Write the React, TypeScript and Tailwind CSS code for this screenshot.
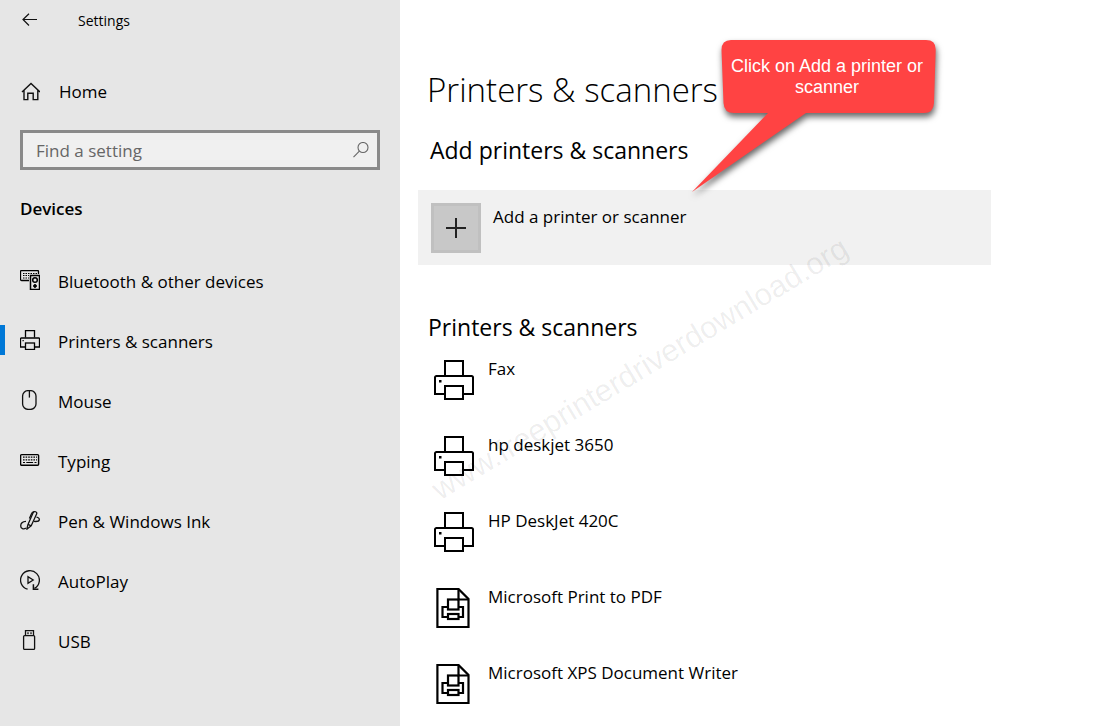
import type { ReactNode } from 'react';
import { clsx } from 'clsx';

function BackIcon() {
    return (
        <svg width="16" height="14" viewBox="0 0 16 14" fill="none" stroke="#111" strokeWidth="1.2">
            <path d="M7 .8 1 6.5l6 6M1 6.5h14" />
        </svg>
    );
}

function HomeIcon() {
    return (
        <svg width="20" height="20" viewBox="0 0 20 20" fill="none" stroke="#111" strokeWidth="1.4">
            <path d="M2 10 11 1.4l9 8.6M4 8.6v9h3.8v-6.4h5.4v6.4h4.6v-9" />
        </svg>
    );
}

function SearchIcon() {
    return (
        <svg width="16" height="16" viewBox="0 0 16 16" fill="none" stroke="#666" strokeWidth="1.1">
            <circle cx="10" cy="5.5" r="5" />
            <path d="M6.4 9.2.5 15.2" />
        </svg>
    );
}

function DevicesIcon() {
    return (
        <svg width="20" height="20" viewBox="0 0 20 20" fill="none" stroke="#000">
            <path d="M9 10.5H1.5a1 1 0 0 1-1-1v-8a1 1 0 0 1 1-1h16a1 1 0 0 1 1 1V4" strokeWidth="1.3" />
            <path d="M3 3.5h14M3 5.5h6M3 8h6" strokeDasharray="1.5 1" />
            <rect x="10.5" y="5.5" width="9" height="14" strokeWidth="1.5" />
            <circle cx="15" cy="10" r="2.3" strokeWidth="1.5" />
            <circle cx="15" cy="16" r="1.4" fill="#000" />
        </svg>
    );
}

function PrinterIcon({ size }: { size: number }) {
    // thin lines fade at the small size, so it gets a heavier stroke
    const stroke = size < 40 ? 2.6 : 2;

    return (
        <svg width={size} height={size} viewBox="0 0 40 40" fill="none" stroke="#000" strokeWidth={stroke}>
            <path d="M11 15V1h18v14" />
            <path d="M11 34H1V17.5a1.5 1.5 0 0 1 1.5-1.5h35a1.5 1.5 0 0 1 1.5 1.5V34H29" />
            <rect x="11" y="26" width="18" height="13" />
            <rect x="5" y="20" width="2.5" height="2.5" fill="#000" stroke="none" />
        </svg>
    );
}

function MouseIcon() {
    return (
        <svg width="20" height="20" viewBox="0 0 20 20" fill="none" stroke="#111" strokeWidth="1.3">
            <rect x="2.6" y=".6" width="13.4" height="18.8" rx="5.5" />
            <path d="M9.4.6v7" />
        </svg>
    );
}

function KeyboardIcon() {
    return (
        <svg width="20" height="20" viewBox="0 0 20 20" fill="none" stroke="#000">
            <rect x=".6" y="4.6" width="18" height="10.6" rx="1" strokeWidth="1.4" />
            <path d="M3 7.2h14M3 9.8h14" strokeWidth="1.2" strokeDasharray="1.6 1" />
            <path d="M3 12.5h2M6.3 12.5h6.8M14.5 12.5h2" strokeWidth="1.2" />
        </svg>
    );
}

function PenIcon() {
    return (
        <svg width="20" height="20" viewBox="0 0 20 20" fill="none" stroke="#111" strokeWidth="1.3" strokeLinejoin="round">
            <path d="M6.8 19.2 8 14.4 13.2 2.6C14.1.6 17.6 1.9 16.6 4L11.2 15.8Z" />
            <path d="M9.4 8.4 11.6 3.4c.4-1 1.4-1.6 2.4-1.6M11.2 15.8 8 14.4" />
            <path d="M6 11.3c-3 .2-5.3 2-5.3 4.6 0 2.8 3 3.6 5.2 2.2" />
            <path d="M16.5 7.2c2 .3 3 1.3 2.8 2.6-.3 1.8-3.2 1.8-5.3 1.6" />
        </svg>
    );
}

function AutoPlayIcon() {
    return (
        <svg width="20" height="20" viewBox="0 0 20 20" fill="none" stroke="#111" strokeWidth="1.3">
            <path d="M7.6 19.2A9.4 9.4 0 1 1 14.4 18.4" />
            <path d="M13.4 14.2v5h5" strokeWidth="1.5" />
            <path d="M8 6.6v6.8L13.2 10Z" />
        </svg>
    );
}

function UsbIcon() {
    return (
        <svg width="20" height="20" viewBox="0 0 20 20" fill="none" stroke="#111" strokeWidth="1.3">
            <path d="M5.500 5.500v-5h8v5" />
            <rect x="3.600" y="5.600" width="11" height="13.800" rx="1" />
            <path d="M8 2.200v2M11 2.200v2" />
        </svg>
    );
}

function PrintDocumentIcon() {
    return (
        <svg width="36" height="40" viewBox="0 0 36 40" fill="none" stroke="#000" strokeWidth="2.2">
            <path d="M1.400 1H22.500L32.500 11V39H1.400Z" />
            <path d="M22.500 1v10.500h10" />
            <rect x="12" y="11.500" width="10.500" height="10" />
            <path d="M12 19H6.500v10H12M22.500 19H27v10h-4.500" />
            <rect x="12" y="26" width="10.500" height="5" />
        </svg>
    );
}

interface NavItem {
    label: string;
    icon: ReactNode;
    active?: boolean;
}

const navItems: NavItem[] = [
    { label: 'Bluetooth & other devices', icon: <DevicesIcon /> },
    { label: 'Printers & scanners', icon: <PrinterIcon size={20} />, active: true },
    { label: 'Mouse', icon: <MouseIcon /> },
    { label: 'Typing', icon: <KeyboardIcon /> },
    { label: 'Pen & Windows Ink', icon: <PenIcon /> },
    { label: 'AutoPlay', icon: <AutoPlayIcon /> },
    { label: 'USB', icon: <UsbIcon /> },
];

const printers = [
    { name: 'Fax', virtual: false },
    { name: 'hp deskjet 3650', virtual: false },
    { name: 'HP DeskJet 420C', virtual: false },
    { name: 'Microsoft Print to PDF', virtual: true },
    { name: 'Microsoft XPS Document Writer', virtual: true },
];

function Sidebar() {
    return (
        <aside className="w-[400px] shrink-0 bg-[#e6e6e6]">
            <header className="flex h-10 items-center pl-[22px]">
                <button type="button" aria-label="Back" className="w-14">
                    <BackIcon />
                </button>
                <span className="pt-0.5 text-sm">Settings</span>
            </header>

            <a href="#home" className="mt-6 flex h-14 items-center gap-[19px] pl-5">
                <HomeIcon />
                Home
            </a>

            <label className="mx-5 mt-[10px] flex h-10 items-center border-[3px] border-[#8a8a8a] bg-[#f0f0f0] pr-2 pl-[13px]">
                <input
                    type="text"
                    aria-label="Find a setting"
                    placeholder="Find a setting"
                    className="min-w-0 flex-1 bg-transparent pt-0.5 outline-none placeholder:text-[#666]"
                />
                <SearchIcon />
            </label>

            <h2 className="mt-[25px] pl-5 leading-7 font-semibold">Devices</h2>

            <nav className="mt-[27px]">
                {navItems.map((item) => (
                    <a
                        key={item.label}
                        href="#"
                        aria-current={item.active ? 'page' : undefined}
                        className="flex h-[60px] items-center"
                    >
                        <span className={clsx('mr-[15px] h-[30px] w-[5px]', item.active && 'bg-[#0078d7]')} />
                        <span className="mr-[18px]">{item.icon}</span>
                        <span className="pt-1">{item.label}</span>
                    </a>
                ))}
            </nav>
        </aside>
    );
}

function Callout() {
    return (
        <div className="pointer-events-none absolute top-[36px] left-[290px] h-[170px] w-[255px]">
            <svg
                className="absolute inset-0 drop-shadow-[1px_4px_3px_rgba(0,0,0,0.6)]"
                width="255"
                height="170"
                viewBox="0 0 255 170"
                fill="#ff4343"
            >
                <path d="M41 4H236Q246 4 245.700 14L244 67Q243.500 77 234 77H116L2 156 78 77H44Q34 77 33.500 67L31.500 14Q31.500 4 41 4Z" />
            </svg>
            <p className="relative mt-5 ml-[31px] w-[212px] text-center font-['Liberation_Sans',Arial,sans-serif] text-lg leading-[21px] text-white">
                Click on Add a printer or scanner
            </p>
        </div>
    );
}

export default function App() {
    return (
        <div className="flex min-h-screen bg-white font-['Open_Sans','Segoe_UI',sans-serif] text-[17px] text-black">
            <Sidebar />

            <main className="relative min-w-0 flex-1 pt-[66px] pr-[106px] pl-[18px]">
                <h1 className="pl-[9px] text-[33px] leading-[48px] font-light">Printers &amp; scanners</h1>

                <h2 className="mt-5 pl-3 text-[23px] leading-8">Add printers &amp; scanners</h2>
                <button type="button" className="mt-6 flex h-[75px] w-full items-start gap-3 bg-[#f1f1f1] p-[13px] text-left">
                    <span className="flex size-[50px] shrink-0 items-center justify-center border-[3px] border-[#c0c0c0] bg-[#c8c8c8]">
                        <svg width="20" height="20" viewBox="0 0 20 20" stroke="#222" strokeWidth="2">
                            <path d="M10 0v20M0 10h20" />
                        </svg>
                    </span>
                    <span className="leading-7">Add a printer or scanner</span>
                </button>

                <h2 className="mt-[46px] pl-[10px] text-[23px] leading-8">Printers &amp; scanners</h2>
                <ul className="mt-[17px] space-y-9 pl-4">
                    {printers.map((printer) => (
                        <li key={printer.name} className="flex h-10 gap-[14px]">
                            <span className="flex w-10 shrink-0 justify-center">
                                {printer.virtual ? <PrintDocumentIcon /> : <PrinterIcon size={40} />}
                            </span>
                            <span className="leading-[18px]">{printer.name}</span>
                        </li>
                    ))}
                </ul>

                <p className="pointer-events-none absolute top-[474px] left-[43px] origin-bottom-left -rotate-31 font-['Liberation_Sans',Arial,sans-serif] text-[31px] leading-8 whitespace-nowrap text-black/7">
                    www.freeprinterdriverdownload.org
                </p>
                <Callout />
            </main>
        </div>
    );
}
